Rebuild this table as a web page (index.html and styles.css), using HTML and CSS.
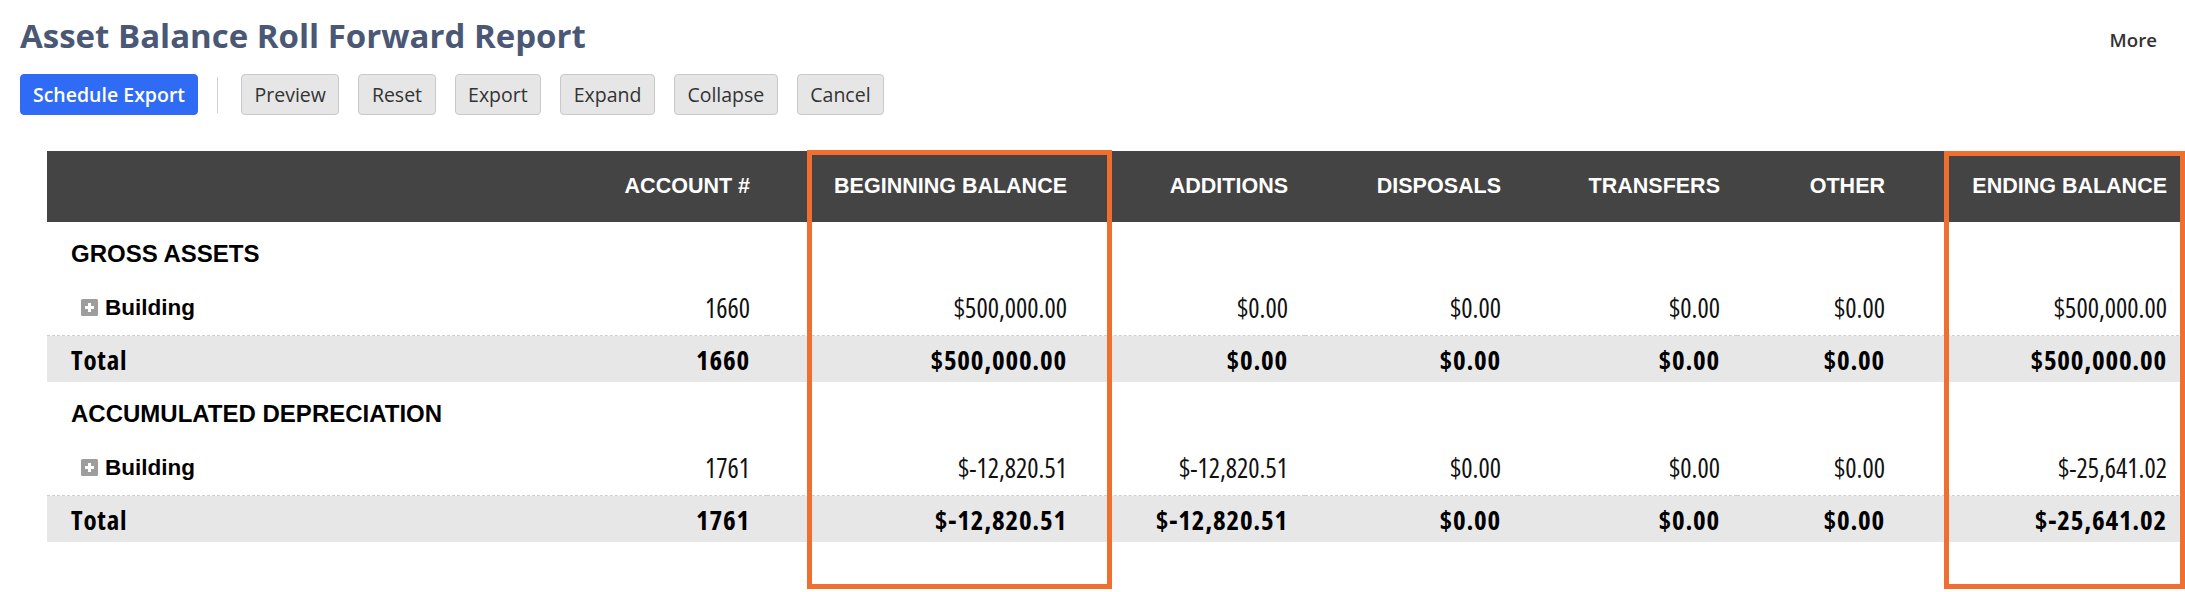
FILE: index.html
```html
<!DOCTYPE html>
<html lang="en">
<head>
<meta charset="utf-8">
<title>Asset Balance Roll Forward Report</title>
<link rel="stylesheet" href="styles.css">
</head>
<body>
<div class="page">
  <header class="top">
    <h1 class="title">Asset Balance Roll Forward Report</h1>
    <a class="more">More</a>
  </header>
  <div class="toolbar">
    <button class="btn primary">Schedule Export</button>
    <span class="sep"></span>
    <button class="btn">Preview</button>
    <button class="btn">Reset</button>
    <button class="btn">Export</button>
    <button class="btn">Expand</button>
    <button class="btn">Collapse</button>
    <button class="btn">Cancel</button>
  </div>
  <div class="report">
    <table class="grid">
      <colgroup>
        <col class="c-label"><col class="c-acct"><col class="c-beg"><col class="c-add"><col class="c-disp"><col class="c-trans"><col class="c-other"><col class="c-end">
      </colgroup>
      <thead>
        <tr>
          <th></th>
          <th>Account #</th>
          <th>Beginning Balance</th>
          <th>Additions</th>
          <th>Disposals</th>
          <th>Transfers</th>
          <th>Other</th>
          <th>Ending Balance</th>
        </tr>
      </thead>
      <tbody>
        <tr class="section"><td colspan="8">GROSS ASSETS</td></tr>
        <tr class="item">
          <td class="label"><span class="toggle"><svg viewBox="0 0 17 17" width="17" height="17"><rect width="17" height="17" rx="1.5" fill="#9d9d9d"/><path d="M8.5 4v9M4 8.5h9" stroke="#fff" stroke-width="3"/></svg></span>Building</td>
          <td>1660</td><td>$500,000.00</td><td>$0.00</td><td>$0.00</td><td>$0.00</td><td>$0.00</td><td>$500,000.00</td>
        </tr>
        <tr class="total">
          <td class="label">Total</td>
          <td>1660</td><td>$500,000.00</td><td>$0.00</td><td>$0.00</td><td>$0.00</td><td>$0.00</td><td>$500,000.00</td>
        </tr>
        <tr class="section"><td colspan="8">ACCUMULATED DEPRECIATION</td></tr>
        <tr class="item">
          <td class="label"><span class="toggle"><svg viewBox="0 0 17 17" width="17" height="17"><rect width="17" height="17" rx="1.5" fill="#9d9d9d"/><path d="M8.5 4v9M4 8.5h9" stroke="#fff" stroke-width="3"/></svg></span>Building</td>
          <td>1761</td><td>$-12,820.51</td><td>$-12,820.51</td><td>$0.00</td><td>$0.00</td><td>$0.00</td><td>$-25,641.02</td>
        </tr>
        <tr class="total">
          <td class="label">Total</td>
          <td>1761</td><td>$-12,820.51</td><td>$-12,820.51</td><td>$0.00</td><td>$0.00</td><td>$0.00</td><td>$-25,641.02</td>
        </tr>
      </tbody>
    </table>
  </div>
  <div class="mark mark-begin"></div>
  <div class="mark mark-end"></div>
</div>
</body>
</html>
```
FILE: styles.css
```css
html, body {
  margin: 0;
  padding: 0;
  background: #fff;
}
body {
  font-family: "Open Sans", "Liberation Sans", sans-serif;
  color: #111;
}
.page {
  position: relative;
  padding-left: 20px;
  height: 592px;
  overflow: hidden;
}
.top {
  display: flex;
  justify-content: space-between;
  align-items: flex-start;
  padding-top: 13px;
  padding-right: 28px;
}
.title {
  margin: 0;
  font-size: 33px;
  line-height: 45px;
  font-weight: 700;
  color: #4b5875;
}
.more {
  margin-top: 14px;
  font-size: 18.67px;
  font-weight: 600;
  color: #333;
}
.toolbar {
  display: flex;
  align-items: center;
  gap: 19px;
  margin-top: 16px;
}
.btn {
  height: 41px;
  padding: 0 12.5px;
  border: 1px solid #c9c9c9;
  border-radius: 4px;
  background: #e6e6e6;
  font-family: "Open Sans", sans-serif;
  font-size: 19.5px;
  font-weight: 500;
  color: #333;
}
.btn.primary {
  width: 178px;
  padding: 0;
  background: #2f6bf5;
  border-color: #2f6bf5;
  color: #fff;
  font-weight: 600;
}
.sep {
  width: 1px;
  height: 36px;
  background: #cfcfcf;
  margin-left: 0;
  margin-right: 4px;
}
.report {
  margin-top: 36px;
  margin-left: 27px;
}
.grid {
  width: 2137px;
  border-collapse: collapse;
  table-layout: fixed;
}
.c-label { width: 513px; }
.c-acct { width: 207px; }
.c-beg { width: 317px; }
.c-add { width: 221px; }
.c-disp { width: 213px; }
.c-trans { width: 219px; }
.c-other { width: 165px; }
.c-end { width: 282px; }
.grid th {
  height: 71px;
  padding: 0 17px 0 0;
  background: #444;
  color: #fff;
  font-family: "Liberation Sans", Arial, sans-serif;
  font-size: 21.5px;
  font-weight: 700;
  text-transform: uppercase;
  text-align: right;
  white-space: nowrap;
}
.grid td {
  padding: 0 17px 0 0;
  text-align: right;
  white-space: nowrap;
  font-family: "Open Sans", sans-serif;
  font-stretch: 75%;
  font-size: 26.5px;
  font-weight: 400;
  color: #111;
}
.section td {
  height: 53px;
  padding-top: 5px;
  padding-left: 24px;
  text-align: left;
  font-family: "Liberation Sans", Arial, sans-serif;
  font-stretch: normal;
  font-size: 24px;
  font-weight: 700;
  color: #000;
}
.item td {
  height: 55px;
  border-bottom: 1px dashed #cfcfcf;
}
.item td.label {
  padding-left: 34px;
  text-align: left;
  font-family: "Liberation Sans", Arial, sans-serif;
  font-stretch: normal;
  font-size: 22.5px;
  font-weight: 700;
  color: #000;
}
.toggle {
  display: inline-block;
  width: 17px;
  height: 17px;
  margin-right: 7px;
  vertical-align: -1px;
}
.toggle svg { display: block; }
.total td {
  height: 46px;
  background: #e7e7e7;
  font-stretch: 75%;
  font-size: 27px;
  letter-spacing: 0.8px;
  font-weight: 700;
  color: #000;
}
.total td.label {
  padding-left: 24px;
  text-align: left;
}
.mark {
  position: absolute;
  border: 5px solid #f06f2e;
  box-sizing: border-box;
}
.mark-begin {
  left: 807px;
  top: 150px;
  width: 305px;
  height: 439px;
}
.mark-end {
  left: 1944px;
  top: 151px;
  width: 241px;
  height: 438px;
}
```
